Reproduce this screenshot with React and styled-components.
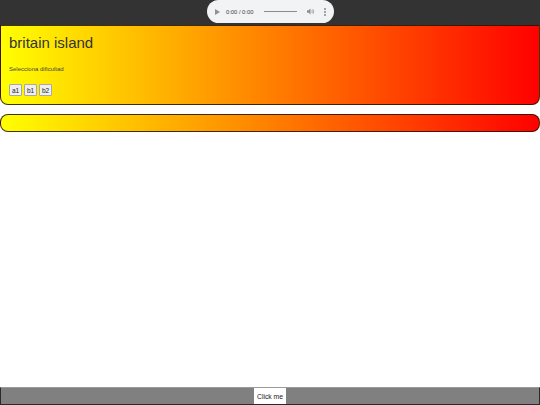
import React from 'react';
import styled, { createGlobalStyle } from 'styled-components';

const GlobalStyle = createGlobalStyle`
    html, body {
        margin: 0;
        padding: 0;
        background: #fff;
        font-family: "Liberation Sans", Arial, sans-serif;
    }
`;

const Page = styled.div`
    min-height: 100vh;
    display: flex;
    flex-direction: column;
`;

const TopBar = styled.header`
    height: 25px;
    background: #333;
    display: flex;
    justify-content: center;
    align-items: flex-start;
`;

const Player = styled.div`
    width: 127px;
    height: 23px;
    margin-left: 1px;
    background: #f1f3f4;
    border-radius: 12px;
    display: flex;
    align-items: center;
    padding: 0 8px 0 8px;
    box-sizing: border-box;
    color: #3c4043;
`;

const Time = styled.span`
    font-size: 5.8px;
    margin-left: 6px;
    white-space: nowrap;
`;

const Track = styled.div`
    flex: 1;
    height: 1px;
    background: #8a8d90;
    margin: 0 10px 0 11px;
`;

const Panel = styled.section`
    box-sizing: border-box;
    background: linear-gradient(to right, #ffff00, #ff0000);
    border: 1px solid rgba(30, 20, 0, 0.85);
    border-radius: ${p => (p.$round ? '8px' : '0 0 8px 8px')};
    margin-top: ${p => p.$gap || 0}px;
    height: ${p => p.$h}px;
    padding: 0 8px;
`;

const Title = styled.h1`
    margin: 8px 0 0;
    font-size: 15px;
    font-weight: normal;
    color: #333;
    line-height: 17px;
`;

const Hint = styled.p`
    margin: 15px 0 0;
    font-size: 6px;
    line-height: 7px;
    color: #444;
`;

const Levels = styled.div`
    display: flex;
    gap: 2px;
    margin-top: 11px;
`;

const Level = styled.button`
    font-family: "Liberation Sans", Arial, sans-serif;
    font-size: 6.5px;
    width: 13px;
    height: 12px;
    padding: 0;
    background: #efefef;
    border: 1px solid #a8a8a8;
    border-radius: 1px;
    color: #222;
`;

const Footer = styled.footer`
    margin-top: auto;
    height: 18px;
    box-sizing: border-box;
    background: #808080;
    border: 1px solid #2a2a2a;
    border-top-color: #9a9a9a;
    display: flex;
    justify-content: center;
    align-items: stretch;
`;

const ClickBtn = styled.button`
    font-family: "Liberation Sans", Arial, sans-serif;
    font-size: 6.8px;
    background: #fff;
    border: none;
    padding: 0 3px;
    white-space: nowrap;
    color: #222;
`;

function PlayIcon() {
    return (
        <svg width="5" height="6" viewBox="0 0 5 6">
            <path d="M0 0 L5 3 L0 6 Z" fill="#8d9094" />
        </svg>
    );
}

function VolumeIcon() {
    return (
        <svg width="8" height="7" viewBox="0 0 8 7" fill="none">
            <path d="M0 2.3 H1.6 L3.5 0.6 V6.4 L1.6 4.7 H0 Z" fill="#8d9094" />
            <path d="M4.8 2.2 Q5.6 3.5 4.8 4.8" stroke="#8d9094" strokeWidth="0.8" />
            <path d="M5.9 1.2 Q7.4 3.5 5.9 5.8" stroke="#8d9094" strokeWidth="0.8" />
        </svg>
    );
}

function MenuIcon() {
    return (
        <svg width="2" height="8" viewBox="0 0 2 8" style={{ marginLeft: 9 }}>
            <circle cx="1" cy="1" r="0.8" fill="#3c4043" />
            <circle cx="1" cy="4" r="0.8" fill="#3c4043" />
            <circle cx="1" cy="7" r="0.8" fill="#3c4043" />
        </svg>
    );
}

export default function App() {
    return (
        <Page>
            <GlobalStyle />
            <TopBar>
                <Player>
                    <PlayIcon />
                    <Time>0:00 / 0:00</Time>
                    <Track />
                    <VolumeIcon />
                    <MenuIcon />
                </Player>
            </TopBar>
            <Panel $h={80}>
                <Title>britain island</Title>
                <Hint>Selecciona dificultad</Hint>
                <Levels>
                    <Level>a1</Level>
                    <Level>b1</Level>
                    <Level>b2</Level>
                </Levels>
            </Panel>
            <Panel $round $gap={9} $h={18} />
            <Footer>
                <ClickBtn>Click me</ClickBtn>
            </Footer>
        </Page>
    );
}
